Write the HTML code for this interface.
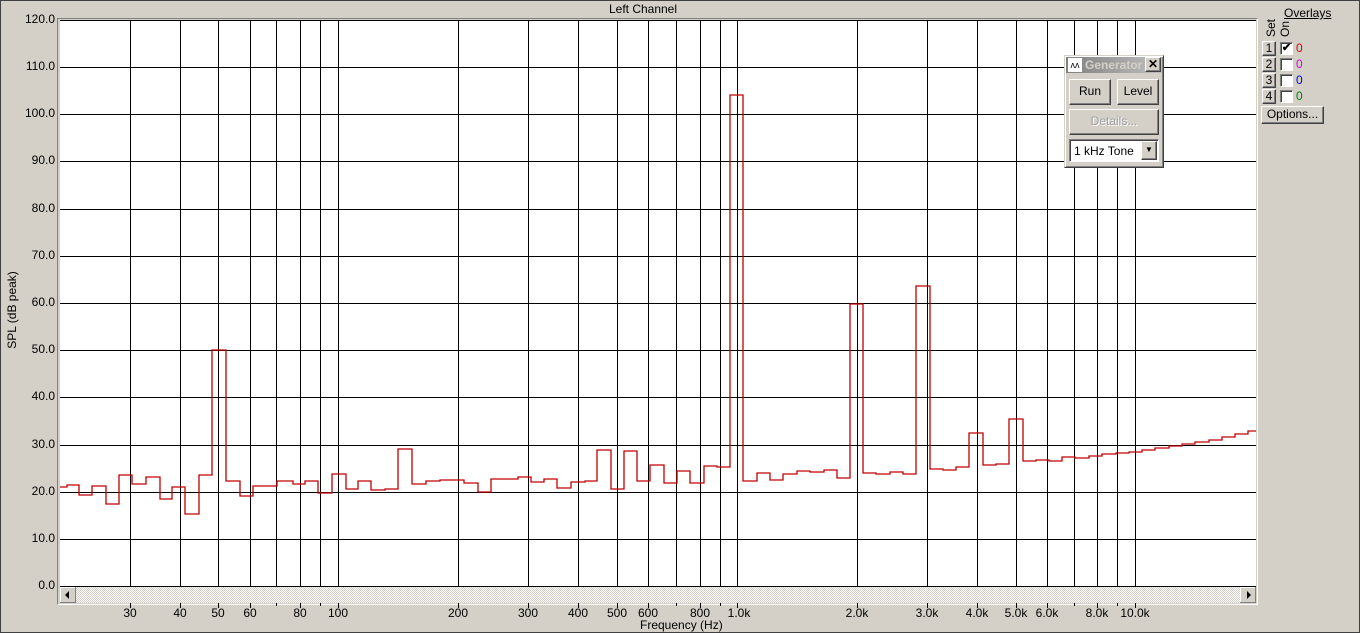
<!DOCTYPE html>
<html><head><meta charset="utf-8"><style>
*{margin:0;padding:0;box-sizing:border-box}
body{width:1360px;height:633px;background:#d4d0c8;font-family:"Liberation Sans",Arial,sans-serif;font-size:12px;position:relative;overflow:hidden}
.abs{position:absolute}
.btn{position:absolute;background:#d4d0c8;border:1px solid;border-color:#fff #404040 #404040 #fff;box-shadow:inset -1px -1px 0 #808080;text-align:center;font-size:12px}
.cb{position:absolute;width:13px;height:13px;background:#fff;border:1px solid;border-color:#808080 #fff #fff #808080;box-shadow:inset 1px 1px 0 #404040}
.yl{position:absolute;right:1305px;font-size:12px;text-align:right}
.xl{position:absolute;top:606px;font-size:12px;transform:translateX(-50%)}
</style></head><body>
<div class="abs" style="left:0;top:0;width:1360px;height:633px;border:1px solid #404040"></div>
<div class="abs" style="left:0;top:2px;width:1286px;text-align:center;font-size:12px">Left Channel</div>
<div class="abs" style="left:57px;top:18px;width:1201px;height:587px;border:1px solid #808080;border-right-color:#fff;border-bottom-color:#fff"></div>
<svg class="abs" style="left:0;top:0" width="1360" height="633">
<rect x="60" y="20" width="1196" height="567" fill="#fff"/>
<g stroke="#000" stroke-width="1">
<path d="M60 20.5H1256M60 67.5H1256M60 114.5H1256M60 161.5H1256M60 209.5H1256M60 256.5H1256M60 303.5H1256M60 350.5H1256M60 397.5H1256M60 445.5H1256M60 492.5H1256M60 539.5H1256M60 586.5H1256"/>
<path d="M130.5 20V587M180.5 20V587M218.5 20V587M250.5 20V587M276.5 20V587M300.5 20V587M320.5 20V587M338.5 20V587M458.5 20V587M528.5 20V587M578.5 20V587M617.5 20V587M648.5 20V587M676.5 20V587M700.5 20V587M720.5 20V587M737.5 20V587M857.5 20V587M927.5 20V587M977.5 20V587M1016.5 20V587M1047.5 20V587M1074.5 20V587M1097.5 20V587M1117.5 20V587M1135.5 20V587"/>
<path d="M130.5 603V608M180.5 603V608M218.5 603V608M250.5 603V608M276.5 603V606M300.5 603V608M320.5 603V606M338.5 603V608M458.5 603V608M528.5 603V608M578.5 603V608M617.5 603V608M648.5 603V608M676.5 603V606M700.5 603V608M720.5 603V606M737.5 603V608M857.5 603V608M927.5 603V608M977.5 603V608M1016.5 603V608M1047.5 603V608M1074.5 603V606M1097.5 603V608M1117.5 603V606M1135.5 603V608"/>
</g>
<path fill="none" stroke="#c00000" stroke-width="1.3" d="M60 487H67V485H79V495H92V486H106V504H119V475H132V484H146V477H160V499H172V487H185V514H199V475H212V350H226V481H240V496H253V486H277V481H293V484H305V481H318V493H332V474H346V489H358V481H371V490H385V489H398V449H412V484H426V481H440V480H464V483H478V492H491V479H518V477H531V482H544V479H557V488H571V482H585V481H597V450H611V489H624V451H637V481H650V465H664V483H677V471H690V483H704V466H717V467H730V95H743V481H757V473H770V480H783V474H797V471H810V472H824V470H837V478H850V304H863V473H876V474H890V472H903V474H916V286H930V469H943V470H956V467H969V433H983V465H996V464H1009V419H1023V461H1036V460H1049V461H1062V457H1075V458H1089V456H1102V454H1116V453H1129V452H1142V450H1155V448H1169V446H1182V444H1195V442H1209V440H1222V437H1235V434H1248V431H1256"/>
<defs><pattern id="h" width="2" height="2" patternUnits="userSpaceOnUse"><rect width="2" height="2" fill="#fff"/><rect width="1" height="1" fill="#d4d0c8"/><rect x="1" y="1" width="1" height="1" fill="#d4d0c8"/></pattern></defs>
<rect x="60" y="587" width="1196" height="16" fill="url(#h)"/>
<rect x="60.5" y="587.5" width="15" height="15" fill="#d4d0c8" stroke="#808080"/><path d="M60.5 602V587.5H75" stroke="#fff" fill="none"/>
<path d="M65 595L69 591V599Z" fill="#000"/>
<rect x="1240.5" y="587.5" width="15" height="15" fill="#d4d0c8" stroke="#808080"/><path d="M1240.5 602V587.5H1255" stroke="#fff" fill="none"/>
<path d="M1251 595L1247 591V599Z" fill="#000"/>
<text x="12" y="310" transform="rotate(-90 12 310)" text-anchor="middle" font-family="Liberation Sans,Arial,sans-serif" font-size="12" dy="4">SPL (dB peak)</text>
<text x="1271" y="37" transform="rotate(-90 1271 37)" font-family="Liberation Sans,Arial,sans-serif" font-size="12" dy="4">Set</text>
<text x="1285" y="37" transform="rotate(-90 1285 37)" font-family="Liberation Sans,Arial,sans-serif" font-size="12" dy="4">On</text>
</svg>
<div class="yl" style="top:12px">120.0</div><div class="yl" style="top:59px">110.0</div><div class="yl" style="top:106px">100.0</div><div class="yl" style="top:153px">90.0</div><div class="yl" style="top:201px">80.0</div><div class="yl" style="top:248px">70.0</div><div class="yl" style="top:295px">60.0</div><div class="yl" style="top:342px">50.0</div><div class="yl" style="top:389px">40.0</div><div class="yl" style="top:437px">30.0</div><div class="yl" style="top:484px">20.0</div><div class="yl" style="top:531px">10.0</div><div class="yl" style="top:578px">0.0</div>
<div class="xl" style="left:130px">30</div><div class="xl" style="left:180px">40</div><div class="xl" style="left:218px">50</div><div class="xl" style="left:250px">60</div><div class="xl" style="left:300px">80</div><div class="xl" style="left:338px">100</div><div class="xl" style="left:458px">200</div><div class="xl" style="left:528px">300</div><div class="xl" style="left:578px">400</div><div class="xl" style="left:617px">500</div><div class="xl" style="left:648px">600</div><div class="xl" style="left:700px">800</div><div class="xl" style="left:739px">1.0k</div><div class="xl" style="left:857px">2.0k</div><div class="xl" style="left:927px">3.0k</div><div class="xl" style="left:977px">4.0k</div><div class="xl" style="left:1016px">5.0k</div><div class="xl" style="left:1047px">6.0k</div><div class="xl" style="left:1097px">8.0k</div><div class="xl" style="left:1135px">10.0k</div>
<div class="abs" style="left:640px;top:618px;font-size:12px">Frequency (Hz)</div>
<!-- Generator -->
<div class="abs" style="left:1064px;top:55px;width:100px;height:113px;background:#d4d0c8;border:1px solid;border-color:#d4d0c8 #404040 #404040 #d4d0c8;box-shadow:inset 1px 1px 0 #fff,inset -1px -1px 0 #808080"></div>
<div class="abs" style="left:1066px;top:57px;width:96px;height:16px;background:linear-gradient(90deg,#808080,#c0c0c0)"></div>
<div class="abs" style="left:1068px;top:58px;width:14px;height:14px;background:#fff;font-size:9px;line-height:14px;text-align:center;color:#000">ᴧᴧ</div>
<div class="abs" style="left:1085px;top:58px;color:#d4d0c8;font-weight:bold;font-size:12px">Generator</div>
<div class="btn" style="left:1145px;top:57px;width:16px;height:15px;font-weight:bold;line-height:12px">✕</div>
<div class="btn" style="left:1069px;top:79px;width:42px;height:26px;line-height:23px">Run</div>
<div class="btn" style="left:1117px;top:79px;width:42px;height:26px;line-height:23px">Level</div>
<div class="btn" style="left:1069px;top:109px;width:90px;height:26px;line-height:23px;color:#a0a0a0;text-shadow:1px 1px #fff">Details...</div>
<div class="abs" style="left:1069px;top:139px;width:90px;height:23px;background:#fff;border:1px solid;border-color:#808080 #fff #fff #808080;box-shadow:inset 1px 1px 0 #404040;padding:4px 0 0 4px">1 kHz Tone</div>
<div class="btn" style="left:1141px;top:141px;width:16px;height:19px;font-size:8px;line-height:16px">▼</div>
<!-- Overlays -->
<div class="abs" style="left:1284px;top:6px;text-decoration:underline">Overlays</div>
<div class="btn" style="left:1262px;top:41px;width:14px;height:15px;line-height:13px">1</div>
<div class="btn" style="left:1262px;top:57px;width:14px;height:15px;line-height:13px">2</div>
<div class="btn" style="left:1262px;top:73px;width:14px;height:15px;line-height:13px">3</div>
<div class="btn" style="left:1262px;top:89px;width:14px;height:15px;line-height:13px">4</div>
<div class="cb" style="left:1280px;top:42px;font-size:11px;line-height:11px;text-align:center;font-weight:bold">✔</div>
<div class="cb" style="left:1280px;top:58px"></div>
<div class="cb" style="left:1280px;top:74px"></div>
<div class="cb" style="left:1280px;top:90px"></div>
<div class="abs" style="left:1296px;top:41px;color:#e00000">0</div>
<div class="abs" style="left:1296px;top:57px;color:#e000e0">0</div>
<div class="abs" style="left:1296px;top:73px;color:#0000e0">0</div>
<div class="abs" style="left:1296px;top:89px;color:#008000">0</div>
<div class="btn" style="left:1261px;top:106px;width:63px;height:18px;line-height:15px">Options...</div>
</body></html>
